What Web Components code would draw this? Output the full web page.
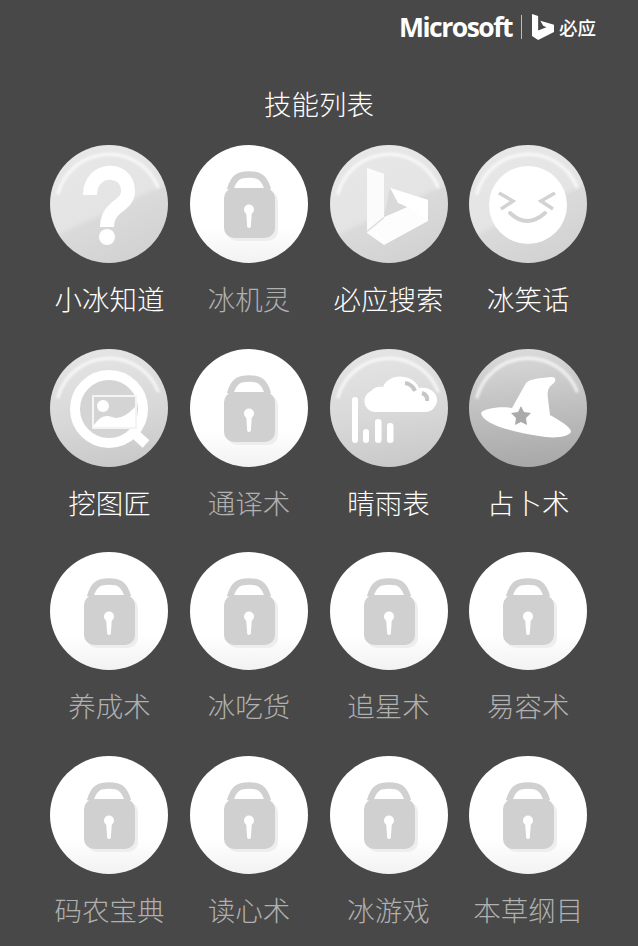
<!DOCTYPE html>
<html lang="zh">
<head>
<meta charset="utf-8">
<title>技能列表</title>
<style>
  html, body { margin: 0; padding: 0; background: #484848; }
  body { font-family: "Noto Sans CJK SC", "Liberation Sans", sans-serif; }
</style>
</head>
<body>
<skill-page>
  <span slot="title">技能列表</span>
  <skill-tile icon="question" active>小冰知道</skill-tile>
  <skill-tile>冰机灵</skill-tile>
  <skill-tile icon="bing" active>必应搜索</skill-tile>
  <skill-tile icon="smile" active>冰笑话</skill-tile>
  <skill-tile icon="search" active dim>挖图匠</skill-tile>
  <skill-tile>通译术</skill-tile>
  <skill-tile icon="weather" active dim>晴雨表</skill-tile>
  <skill-tile icon="hat" active dark>占卜术</skill-tile>
  <skill-tile>养成术</skill-tile>
  <skill-tile>冰吃货</skill-tile>
  <skill-tile>追星术</skill-tile>
  <skill-tile>易容术</skill-tile>
  <skill-tile>码农宝典</skill-tile>
  <skill-tile>读心术</skill-tile>
  <skill-tile>冰游戏</skill-tile>
  <skill-tile>本草纲目</skill-tile>
</skill-page>

<script>
"use strict"

// svg bodies for the round buttons, all drawn on a 118x118 box.
const bingMark = 'M37 23 L54 29 L54 72 L77 62 L68 58 L60 43 L98 55 L98 76 L54 100 L37 88 Z';
const ICONS = {
    lock: `
        <path d="M40 45 C44 31 50 29.500 59 29.500 C68 29.500 74 31 78 45" fill="none" stroke="#d0d0d0" stroke-width="6.500"/>
        <rect x="37" y="46" width="51" height="50" rx="10" fill="#eeeeee"/>
        <rect x="34" y="43" width="51" height="50" rx="10" fill="#d0d0d0"/>
        <circle cx="59" cy="64.500" r="5" fill="#fff"/>
        <path d="M56 65 L62 65 L60.800 82 Q59 84 57.200 82 Z" fill="#fff"/>`,
    question: `
        <path d="M40 50 C40 21 78 21 78 46 C78 62 57 60 57 82" fill="none" stroke="#fff" stroke-width="14" stroke-linejoin="round"/>
        <circle cx="57" cy="92" r="8" fill="#fff"/>`,
    bing: `
        <path d="${bingMark}" fill="#fdfdfd"/>
        <path d="M37 23 L54 29 L54 72 L37 86 Z" fill="#fbfbfb"/>
        <path d="M60 43 L98 55 L98 76 L77 62 L68 58 Z" fill="#fff"/>
        <path d="M54 72 L77 62 L68 58 L60 43 Z" fill="#d9d9d9"/>
        <path d="M37 86.500 L54 72.500" stroke="#dcdcdc" stroke-width="1.500"/>`,
    smile: `
        <circle cx="59" cy="60" r="39" fill="#fff"/>
        <path d="M30 48 L44 56 L32 64 M86 48 L72 56 L84 64" fill="none" stroke="#d2d2d2" stroke-width="3.500"/>
        <path d="M41 68 Q58 84 76 68" fill="none" stroke="#d2d2d2" stroke-width="4" stroke-linecap="round"/>`,
    search: `
        <circle cx="59" cy="60" r="29" fill="#d4d4d4"/>
        <circle cx="59" cy="60" r="34" fill="none" stroke="#fff" stroke-width="10"/>
        <path d="M85 85 L96 95" stroke="#fff" stroke-width="10"/>
        <rect x="43" y="47" width="43" height="32" fill="none" stroke="#f4f4f4" stroke-width="2"/>
        <circle cx="53" cy="57" r="6" fill="#fff"/>
        <path d="M44 76 Q52 64 62 68 T85 58 L85 78 L44 78 Z" fill="#fff"/>`,
    weather: `
        <path d="M44 63 A11 11 0 0 1 41 42 C44 38 49 37 53 38 C56 30 66 26 74 28 C82 29 87 34 89 39 C99 37 108 44 107 52 C106 58 102 62 97 63 Z" fill="#fff"/>
        <path d="M75 34 Q82 35 85 42 M92 44 Q98 46 97 52" fill="none" stroke="#c6c6c6" stroke-width="4"/>
        <rect x="22" y="48" width="6" height="46" rx="3" fill="#fff"/>
        <rect x="33" y="80" width="6" height="14" rx="3" fill="#fff"/>
        <rect x="45" y="70" width="6.500" height="24" rx="3" fill="#fff"/>
        <rect x="57" y="74" width="6.500" height="20" rx="3" fill="#fff"/>`,
    hat: `
        <path d="M12 64 C14 60 30 57 43 59 L57 34 C62 29 74 29 83 28 C87 28 87 31 85 34 C79 38 78 42 79 50 L81 66 C92 72 101 78 102 82 C102 88 84 90 70 87 C45 83 14 76 12 64 Z" fill="#fff"/>
        <path d="M52 57 L55 63 L62 64 L57 69 L58 76 L52 73 L46 76 L47 69 L42 64 L49 63 Z" fill="#aaa"/>`
};

const tileTemplate = document.createElement('template');
tileTemplate.innerHTML = `
<style>
    :host {
        display: flex;
        flex-flow: column nowrap;
        align-items: center;
        color: #b0b0b0;
        font-size: 27.5px;
        font-weight: 300;
    }
    :host([active]) {
        color: #fff;
    }
    .round {
        position: relative;
        width: 118px;
        height: 118px;
        border-radius: 50%;
        background: linear-gradient(180deg, #ffffff 0%, #ffffff 70%, #f2f2f2 100%);
    }
    :host([active]) .round {
        background: linear-gradient(155deg, #e8e8e8 0%, #e4e4e4 52%, #dadada 56%, #cfcfcf 100%);
    }
    :host([dim]) .round {
        background: linear-gradient(170deg, #e6e6e6 0%, #d8d8d8 55%, #c6c6c6 100%);
    }
    :host([dark]) .round {
        background: linear-gradient(175deg, #dcdcdc 0%, #bdbdbd 55%, #a6a6a6 100%);
    }
    svg {
        display: block;
        width: 118px;
        height: 118px;
    }
    .rim {
        display: none;
    }
    :host([active]) .rim {
        display: inline;
    }
    .label {
        margin-top: 15px;
        line-height: 40px;
        white-space: nowrap;
    }
</style>
<div class="round"><svg viewBox="0 0 118 118"></svg></div>
<div class="label"><slot></slot></div>
`;

// one round skill button with its name under it.
class SkillTile extends HTMLElement {
    constructor() {
        super();
        this.attachShadow({ mode: 'open' });
        this.shadowRoot.appendChild(tileTemplate.content.cloneNode(true));
    }
    connectedCallback() {
        const icon = ICONS[this.getAttribute('icon')] || ICONS.lock;
        this.shadowRoot.querySelector('svg').innerHTML = `
            <defs><filter id="soft" x="-10%" y="-10%" width="120%" height="120%"><feGaussianBlur stdDeviation="1"/></filter></defs>
            <path class="rim" d="M8 48 A53 53 0 0 1 108 42" fill="none" stroke="#fff" stroke-opacity=".65" stroke-width="3.500" stroke-linecap="round" filter="url(#soft)"/>
            ${icon}`;
    }
}
window.customElements.define('skill-tile', SkillTile);

const brandTemplate = document.createElement('template');
brandTemplate.innerHTML = `
<style>
    :host {
        display: flex;
        align-items: center;
        height: 54px;
        justify-content: flex-end;
        padding-right: 42px;
        color: #fff;
    }
    .ms {
        font: 700 26.5px "Open Sans", "Liberation Sans", sans-serif;
        letter-spacing: -1.5px;
    }
    .bar {
        width: 1px;
        height: 24px;
        margin: 0 10px 0 9px;
        background: #bdbdbd;
    }
    svg {
        display: block;
        width: 22px;
        height: 26px;
    }
    .cn {
        margin-left: 5px;
        font: 500 18.500px "Noto Sans CJK SC", sans-serif;
    }
</style>
<span class="ms">Microsoft</span>
<span class="bar"></span>
<svg viewBox="37 23 61 77" preserveAspectRatio="none"><path d="${bingMark}" fill="#fff"/></svg>
<span class="cn">必应</span>
`;

// logo line at the top of the page.
class BrandBar extends HTMLElement {
    constructor() {
        super();
        this.attachShadow({ mode: 'open' });
        this.shadowRoot.appendChild(brandTemplate.content.cloneNode(true));
    }
}
window.customElements.define('brand-bar', BrandBar);

const pageTemplate = document.createElement('template');
pageTemplate.innerHTML = `
<style>
    :host {
        display: block;
        width: 638px;
        height: 946px;
        overflow: hidden;
        background: #484848;
    }
    h1 {
        margin: 28px 0 21px;
        line-height: 42px;
        font-size: 27.500px;
        font-weight: 300;
        text-align: center;
        color: #fff;
    }
    main {
        display: grid;
        grid-template-columns: repeat(4, 139.6px);
        grid-auto-rows: 203.5px;
        padding-left: 39.6px;
    }
</style>
<brand-bar></brand-bar>
<h1><slot name="title"></slot></h1>
<main><slot></slot></main>
`;

class SkillPage extends HTMLElement {
    constructor() {
        super();
        this.attachShadow({ mode: 'open' });
        this.shadowRoot.appendChild(pageTemplate.content.cloneNode(true));
    }
}
window.customElements.define('skill-page', SkillPage);
</script>
</body>
</html>
